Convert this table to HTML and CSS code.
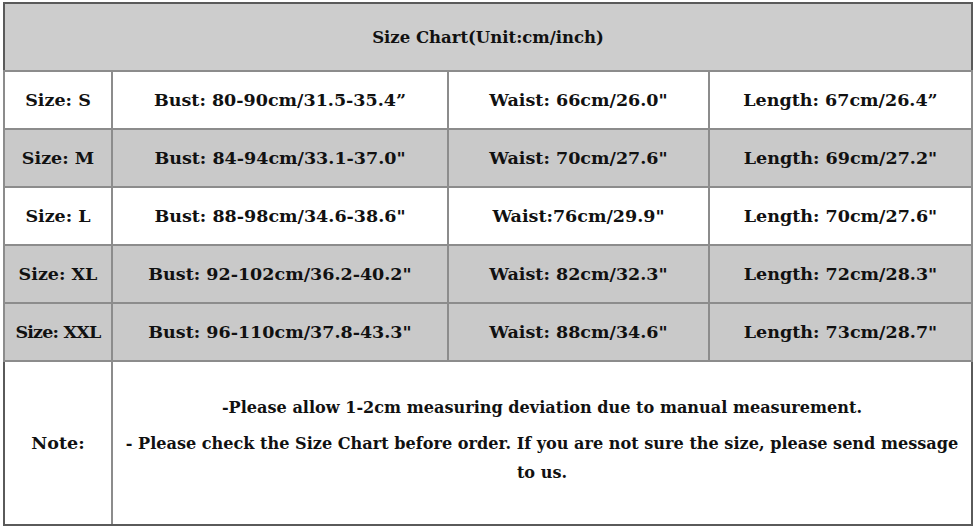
FILE: index.html
```html
<!DOCTYPE html>
<html>
<head>
<meta charset="utf-8">
<link rel="stylesheet" href="styles.css">
</head>
<body>
<table class="chart">
  <colgroup>
    <col class="c1"><col class="c2"><col class="c3"><col class="c4">
  </colgroup>
  <tr class="head"><td colspan="4">Size Chart(Unit:cm/inch)</td></tr>
  <tr class="row"><td>Size: S</td><td>Bust: 80-90cm/31.5-35.4”</td><td>Waist: 66cm/26.0"</td><td>Length: 67cm/26.4”</td></tr>
  <tr class="row gray"><td>Size: M</td><td>Bust: 84-94cm/33.1-37.0"</td><td>Waist: 70cm/27.6"</td><td>Length: 69cm/27.2"</td></tr>
  <tr class="row"><td>Size: L</td><td>Bust: 88-98cm/34.6-38.6"</td><td>Waist:76cm/29.9"</td><td>Length: 70cm/27.6"</td></tr>
  <tr class="row gray"><td>Size: XL</td><td>Bust: 92-102cm/36.2-40.2"</td><td>Waist: 82cm/32.3"</td><td>Length: 72cm/28.3"</td></tr>
  <tr class="row gray"><td class="xxl">Size: XXL</td><td>Bust: 96-110cm/37.8-43.3"</td><td>Waist: 88cm/34.6"</td><td>Length: 73cm/28.7"</td></tr>
  <tr class="note"><td class="note-label">Note:</td><td colspan="3" class="note-text">
    <p class="l1">-Please allow 1-2cm measuring deviation due to manual measurement.</p>
    <p class="l2">- Please check the Size Chart before order. If you are not sure the size, please send message<br>to us.</p>
  </td></tr>
</table>
</body>
</html>
```
FILE: styles.css
```css
html, body {
  margin: 0;
  padding: 0;
  background: #ffffff;
}
body {
  width: 975px;
  height: 530px;
  overflow: hidden;
}
.chart {
  margin: 2px 0 0 3px;
  width: 968px;
  table-layout: fixed;
  border-collapse: collapse;
  border: 2px solid #5a5a5a;
  font-family: "DejaVu Serif", "Liberation Serif", serif;
  font-weight: bold;
  font-size: 17.5px;
  color: #111111;
}
.c1 { width: 108px; }
.c2 { width: 336px; }
.c3 { width: 261px; }
.c4 { width: 263px; }
.chart td {
  border: 2px solid #8c8c8c;
  text-align: center;
  vertical-align: middle;
  padding: 0;
}
.head td {
  height: 66px;
  background: #cdcdcd;
  font-size: 16.5px;
  border-color: #5a5a5a #5a5a5a #8c8c8c #5a5a5a;
}
.row td {
  height: 56px;
  background: #ffffff;
}
.row.gray td {
  background: #c9c9c9;
}
.chart .xxl {
  letter-spacing: -0.8px;
}
.note td {
  height: 162px;
  border-bottom-color: #5a5a5a;
}
.chart .note-label {
  border-left-color: #5a5a5a;
}
.chart .note-text {
  padding: 0 4px 6px 4px;
  height: 156px;
  font-size: 16.1px;
  border-right-color: #5a5a5a;
}
.note-text p {
  margin: 0;
  line-height: 29px;
  white-space: nowrap;
}
.note-text .l1 {
  margin-bottom: 7px;
}
```
